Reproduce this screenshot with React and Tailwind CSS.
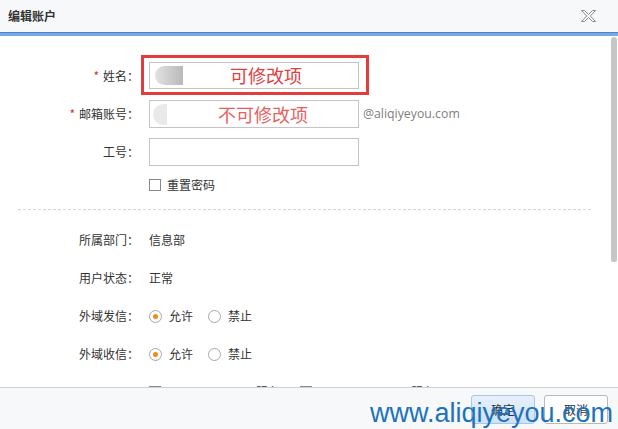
import React from "react";

const font = { fontFamily: '"Noto Sans CJK SC", "Noto Sans", sans-serif' };

function Label({ children, req }) {
  return (
    <div className="w-[149px] pr-[10px] text-right shrink-0 text-[12px] text-[#333]">
      {req && <span className="text-[#c33] mr-[4px]">*</span>}
      {children}
    </div>
  );
}

function Radio({ checked, label }) {
  return (
    <div className="flex items-center gap-[7px]">
      <span className="w-[13px] h-[13px] rounded-full border border-[#a8a8a8] bg-white flex items-center justify-center">
        {checked && <span className="w-[5px] h-[5px] rounded-full bg-[#f08c1a]" />}
      </span>
      <span>{label}</span>
    </div>
  );
}

function Box() {
  return <span className="w-[12px] h-[12px] border border-[#8a8a8a] bg-white inline-block shrink-0" />;
}

export default function App() {
  return (
    <div className="w-[618px] h-[429px] relative overflow-hidden bg-white flex flex-col" style={font}>
      {/* header */}
      <div className="h-[32px] shrink-0 bg-[#f7f8fa] flex items-center justify-between pl-[8px] pr-[22px]">
        <span className="text-[12px] font-bold text-[#333]">编辑账户</span>
        <svg width="15" height="12" viewBox="0 0 15 12">
          <path d="M0.5 0.5 H3.5 L7.5 4.5 L11.5 0.5 H14.5 L9.3 6 L14.5 11.5 H11.5 L7.5 7.5 L3.5 11.5 H0.5 L5.7 6 Z" fill="none" stroke="#8c8c8c" strokeWidth="1" />
        </svg>
      </div>
      <div className="h-[1px] shrink-0 bg-[#4c84cc]" />
      <div className="h-[3px] shrink-0 bg-[#74abe6]" />

      {/* body */}
      <div className="flex-1 relative overflow-hidden">
        <div className="absolute right-[1px] top-[1px] w-[6px] h-[225px] rounded-t-[3px] rounded-b-[2px] bg-[#c6c6c6]" />
        <div className="flex flex-col text-[12px] text-[#333]">
          {/* row 1 */}
          <div className="flex items-center mt-[26px] h-[27px] relative">
            <Label req>姓名：</Label>
            <div className="w-[210px] h-[27px] border border-[#c4c4c4] bg-white relative">
              <span className="absolute left-[5px] top-[3px] w-[28px] h-[19px] rounded-l-full bg-gradient-to-r from-[#e2e2e2] to-[#b9b9b9]" />
            </div>
            <div className="absolute left-[141px] top-[-7px] w-[228px] h-[40px] border-[3px] border-[#e23c3c]" />
            <span className="absolute left-[230px] top-[0px] text-[18px] leading-[27px] text-[#e0403e]">可修改项</span>
          </div>
          {/* row 2 */}
          <div className="flex items-center mt-[11px] h-[28px] relative">
            <Label req>邮箱账号：</Label>
            <div className="w-[210px] h-[28px] border border-[#c4c4c4] bg-white relative">
              <span className="absolute left-[3px] top-[3px] w-[14px] h-[21px] rounded-l-full bg-[#e9e9e9]" />
            </div>
            <span className="ml-[4px] text-[12.3px] text-[#808080]" style={{ fontFamily: '"Open Sans", sans-serif' }}>@aliqiyeyou.com</span>
            <span className="absolute left-[218px] top-[0px] text-[18px] leading-[28px] text-[#e8605e]">不可修改项</span>
          </div>
          {/* row 3 */}
          <div className="flex items-center mt-[10px] h-[28px]">
            <Label>工号：</Label>
            <div className="w-[210px] h-[28px] border border-[#c4c4c4] bg-white" />
          </div>
          {/* checkbox */}
          <div className="flex items-center mt-[13px] h-[12px]">
            <div className="w-[149px] shrink-0" />
            <Box />
            <span className="ml-[6px]">重置密码</span>
          </div>
          {/* dashed */}
          <div className="mx-[18px] w-[573px] mt-[18px] border-t border-dashed border-[#d6d6d6]" />
          <div className="h-[11px]" />
          <div className="flex items-center h-[38px]">
            <Label>所属部门：</Label>
            <span>信息部</span>
          </div>
          <div className="flex items-center h-[38px]">
            <Label>用户状态：</Label>
            <span>正常</span>
          </div>
          <div className="flex items-center h-[38px]">
            <Label>外域发信：</Label>
            <div className="flex items-center gap-[15px]">
              <Radio checked label="允许" />
              <Radio label="禁止" />
            </div>
          </div>
          <div className="flex items-center h-[38px]">
            <Label>外域收信：</Label>
            <div className="flex items-center gap-[15px]">
              <Radio checked label="允许" />
              <Radio label="禁止" />
            </div>
          </div>
          <div className="flex items-center h-[38px]">
            <Label />
            <div className="flex items-center w-[151px]">
              <Box />
              <span className="ml-[6px]">显示 POP/SMTP 服务</span>
            </div>
            <div className="flex items-center">
              <Box />
              <span className="ml-[6px]">显示 IMAP/SMTP 服务</span>
            </div>
          </div>
        </div>
      </div>

      {/* footer */}
      <div className="h-[42px] shrink-0 bg-[#f7f8fa] border-t border-[#cdd2d7] flex items-start justify-end gap-[9px] pt-[7px] pr-[10px] text-[12px] text-[#333]">
        <button className="w-[64px] h-[29px] rounded-[3px] border border-[#a9c6e8] bg-gradient-to-b from-[#e6f0fb] to-[#cfe1f6]">确定</button>
        <button className="w-[64px] h-[29px] rounded-[3px] border border-[#b8b8b8] bg-white">取消</button>
      </div>

      {/* watermark */}
      <span className="absolute left-[370px] top-[400px] text-[27px] leading-[27px] text-[#1d72bd]" style={{ fontFamily: '"Liberation Sans", Arial, sans-serif' }}>
        www.aliqiyeyou.com
      </span>
    </div>
  );
}
